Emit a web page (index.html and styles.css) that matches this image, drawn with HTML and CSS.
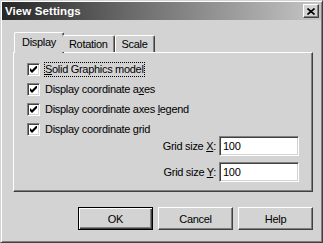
FILE: index.html
```html
<!DOCTYPE html>
<html>
<head>
    <title>View Settings</title>
    <meta name="viewport" content="width=device-width, initial-scale=1"/>
    <link rel="stylesheet" href="styles.css">
</head>
<body>
<div class="window">
    <div class="titlebar">
        <span class="title">View Settings</span>
        <button class="close" type="button">
            <svg width="8" height="7" viewBox="0 0 8 7">
                <path d="M0.5 0.5 L7.5 6.5 M7.5 0.5 L0.5 6.5" stroke="#000" stroke-width="1.6" fill="none"/>
            </svg>
        </button>
    </div>

    <div class="content">
        <div class="tabs">
            <div class="tab active">Display</div>
            <div class="tab">Rotation</div>
            <div class="tab">Scale</div>
        </div>

        <div class="panel">
            <div class="check">
                <span class="box"><svg width="7" height="7" viewBox="0 0 7 7"><path d="M0 2 L0 5 L2 7 L7 2 L7 -1 L2 4 Z" fill="#000"/></svg></span>
                <span class="label focus"><u>S</u>olid Graphics model</span>
            </div>
            <div class="check">
                <span class="box"><svg width="7" height="7" viewBox="0 0 7 7"><path d="M0 2 L0 5 L2 7 L7 2 L7 -1 L2 4 Z" fill="#000"/></svg></span>
                <span class="label">Display coordinate a<u>x</u>es</span>
            </div>
            <div class="check">
                <span class="box"><svg width="7" height="7" viewBox="0 0 7 7"><path d="M0 2 L0 5 L2 7 L7 2 L7 -1 L2 4 Z" fill="#000"/></svg></span>
                <span class="label">Display coordinate axes <u>l</u>egend</span>
            </div>
            <div class="check">
                <span class="box"><svg width="7" height="7" viewBox="0 0 7 7"><path d="M0 2 L0 5 L2 7 L7 2 L7 -1 L2 4 Z" fill="#000"/></svg></span>
                <span class="label">Display coordinate grid</span>
            </div>

            <div class="fields">
                <div class="field">
                    <span class="field-label">Grid size <u>X</u>:</span>
                    <span class="input">100</span>
                </div>
                <div class="field">
                    <span class="field-label">Grid size <u>Y</u>:</span>
                    <span class="input">100</span>
                </div>
            </div>
        </div>

        <div class="buttons">
            <button type="button" class="btn default"><span>OK</span></button>
            <button type="button" class="btn"><span>Cancel</span></button>
            <button type="button" class="btn"><span>Help</span></button>
        </div>
    </div>
</div>
</body>
</html>
```

FILE: styles.css
```css
body {
    margin: 0;
    font-family: "Liberation Sans", Arial, sans-serif;
    font-size: 11px;
    letter-spacing: -0.3px;
    color: #000000;
}

.window {
    width: 323px;
    height: 243px;
    box-sizing: border-box;
    background: #d3d3d3;
    border: 1px solid;
    border-color: #d3d3d3 #404040 #404040 #d3d3d3;
    box-shadow: inset 1px 1px #ffffff, inset -1px -1px #808080;
    padding: 1px;
}

.titlebar {
    height: 18px;
    display: flex;
    align-items: center;
    justify-content: space-between;
    padding: 0 2px 0 3px;
    background: linear-gradient(to right, #262626 0%, #6a6a6a 40%, #c6c6c6 100%);
}

.title {
    color: #ffffff;
    font-weight: bold;
    font-size: 11.5px;
    letter-spacing: 0.1px;
}

.close {
    width: 16px;
    height: 14px;
    padding: 0;
    margin: 0;
    display: flex;
    align-items: center;
    justify-content: center;
    background: #d3d3d3;
    border: 1px solid;
    border-color: #ffffff #404040 #404040 #ffffff;
    box-shadow: inset -1px -1px #808080;
}

.content {
    padding: 12px 8px 0 11px;
}

.tabs {
    height: 20px;
    display: flex;
    align-items: flex-end;
    padding-left: 1px;
    position: relative;
    z-index: 1;
}

.tab {
    height: 17px;
    box-sizing: border-box;
    padding: 2px 6px 0 6px;
    border: 1px solid;
    border-bottom: none;
    border-color: #ffffff #404040 #ffffff #ffffff;
    border-radius: 2px 2px 0 0;
    box-shadow: inset -1px 0 #808080;
    background: #d3d3d3;
}

.tab.active {
    height: 21px;
    margin-bottom: -1px;
    padding: 3px 7px 0 7px;
    margin-right: -2px;
}

.tab.active + .tab {
    border-left-color: transparent;
}

.panel {
    height: 140px;
    box-sizing: border-box;
    border: 1px solid;
    border-color: #ffffff #404040 #404040 #ffffff;
    box-shadow: inset -1px -1px #808080;
    padding: 10px 13px 0 13px;
    display: flex;
    flex-direction: column;
    gap: 7px;
}

.check {
    height: 13px;
    display: flex;
    align-items: center;
    gap: 5px;
}

.box {
    width: 13px;
    height: 13px;
    box-sizing: border-box;
    background: #ffffff;
    border: 1px solid;
    border-color: #808080 #ffffff #ffffff #808080;
    box-shadow: inset 1px 1px #404040, inset -1px -1px #d3d3d3;
    display: flex;
    align-items: center;
    justify-content: center;
}

.label {
    line-height: 13px;
}

.label.focus {
    outline: 1px dotted #000000;
}

.fields {
    margin-top: -7px;
    display: flex;
    flex-direction: column;
    align-items: flex-end;
    gap: 6px;
}

.field {
    display: flex;
    align-items: center;
    gap: 3px;
}

.input {
    width: 80px;
    height: 20px;
    box-sizing: border-box;
    background: #ffffff;
    border: 1px solid;
    border-color: #808080 #ffffff #ffffff #808080;
    box-shadow: inset 1px 1px #404040, inset -1px -1px #d3d3d3;
    padding: 3px 0 0 3px;
}

.buttons {
    margin-top: 15px;
    display: flex;
    justify-content: flex-end;
    gap: 5px;
}

.btn {
    width: 75px;
    height: 23px;
    padding: 0;
    margin: 0;
    font-family: inherit;
    font-size: 11px;
    letter-spacing: -0.3px;
    color: #000000;
    background: #d3d3d3;
    border: 1px solid;
    border-color: #ffffff #404040 #404040 #ffffff;
    box-shadow: inset -1px -1px #808080;
}

.btn.default {
    border: 1px solid #000000;
    box-shadow: inset 1px 1px #ffffff, inset -1px -1px #404040, inset -2px -2px #808080;
}
```
